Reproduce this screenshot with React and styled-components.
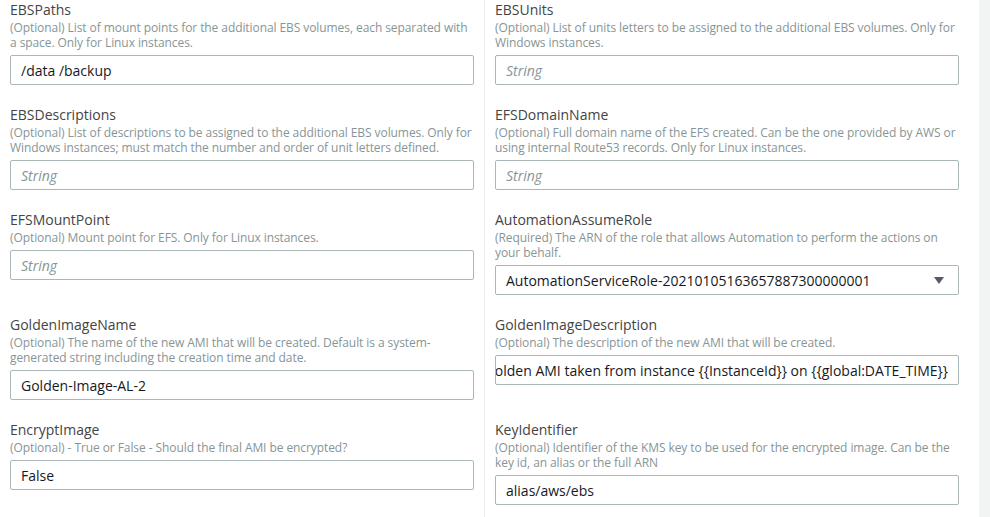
import React from "react";
import styled, { createGlobalStyle } from "styled-components";

const GlobalStyle = createGlobalStyle`
  html, body { margin: 0; padding: 0; background: #ffffff; }
  body { font-family: "Open Sans", "Noto Sans", sans-serif; }
`;

const Page = styled.div`
  display: flex;
  width: 990px;
  height: 517px;
  overflow: hidden;
  background: #ffffff;
`;

const Panel = styled.div`
  flex: 0 0 979px;
  display: grid;
  grid-template-columns: 484px 495px;
  align-content: start;
  background: #ffffff;
`;

const Gutter = styled.div`
  flex: 1;
  background: #f2f3f3;
`;

const Field = styled.div`
  display: flex;
  flex-direction: column;
  padding: ${(p) => (p.$right ? "0 20px 20px 10px" : "0 10px 20px 10px")};
  border-left: ${(p) => (p.$right ? "1px solid #eaeded" : "none")};
`;

const Label = styled.div`
  font-size: 14px;
  line-height: 20px;
  color: #444444;
`;

const Description = styled.div`
  font-size: 12px;
  line-height: 15px;
  letter-spacing: -0.08px;
  color: #879596;
`;

const TextInput = styled.input`
  box-sizing: border-box;
  margin: 5px 0 0;
  width: 100%;
  height: 30px;
  padding: 0 10px;
  border: 1px solid #aab7b8;
  border-radius: 2px;
  font-family: "Open Sans", "Noto Sans", sans-serif;
  font-size: 14px;
  color: #16191f;
  background: #ffffff;
  outline: none;
  &::placeholder {
    font-style: italic;
    color: #879596;
  }
`;

const ScrolledValue = styled.div`
  box-sizing: border-box;
  margin-top: 5px;
  height: 30px;
  padding: 0 10px;
  border: 1px solid #aab7b8;
  border-radius: 2px;
  display: flex;
  align-items: center;
  justify-content: flex-end;
  overflow: hidden;
  white-space: nowrap;
  font-size: 14px;
  color: #16191f;
`;

const SelectBox = styled.div`
  box-sizing: border-box;
  margin-top: 5px;
  height: 30px;
  padding: 0 14px 0 10px;
  border: 1px solid #aab7b8;
  border-radius: 2px;
  display: flex;
  align-items: center;
  justify-content: space-between;
  font-size: 14px;
  color: #16191f;
`;

const Caret = () => (
  <svg width="10" height="7" viewBox="0 0 10 7" aria-hidden="true">
    <path d="M0 0 L10 0 L5 7 Z" fill="#545b64" />
  </svg>
);

function Input({ value, placeholder }) {
  return <TextInput readOnly defaultValue={value} placeholder={placeholder} />;
}

const fields = [
  {
    label: "EBSPaths",
    desc: "(Optional) List of mount points for the additional EBS volumes, each separated with a space. Only for Linux instances.",
    value: "/data /backup",
  },
  {
    label: "EBSUnits",
    desc: "(Optional) List of units letters to be assigned to the additional EBS volumes. Only for Windows instances.",
    placeholder: "String",
  },
  {
    label: "EBSDescriptions",
    desc: "(Optional) List of descriptions to be assigned to the additional EBS volumes. Only for Windows instances; must match the number and order of unit letters defined.",
    placeholder: "String",
  },
  {
    label: "EFSDomainName",
    desc: "(Optional) Full domain name of the EFS created. Can be the one provided by AWS or using internal Route53 records. Only for Linux instances.",
    placeholder: "String",
  },
  {
    label: "EFSMountPoint",
    desc: "(Optional) Mount point for EFS. Only for Linux instances.",
    placeholder: "String",
  },
  {
    label: "AutomationAssumeRole",
    desc: "(Required) The ARN of the role that allows Automation to perform the actions on your behalf.",
    select: "AutomationServiceRole-20210105163657887300000001",
  },
  {
    label: "GoldenImageName",
    desc: "(Optional) The name of the new AMI that will be created. Default is a system-generated string including the creation time and date.",
    value: "Golden-Image-AL-2",
  },
  {
    label: "GoldenImageDescription",
    desc: "(Optional) The description of the new AMI that will be created.",
    scrolled: "Golden AMI taken from instance {{InstanceId}} on {{global:DATE_TIME}}",
  },
  {
    label: "EncryptImage",
    desc: "(Optional) - True or False - Should the final AMI be encrypted?",
    value: "False",
  },
  {
    label: "KeyIdentifier",
    desc: "(Optional) Identifier of the KMS key to be used for the encrypted image. Can be the key id, an alias or the full ARN",
    value: "alias/aws/ebs",
  },
];

export default function App() {
  return (
    <>
      <GlobalStyle />
      <Page>
        <Panel>
          {fields.map((f, i) => (
            <Field key={f.label} $right={i % 2 === 1}>
              <Label>{f.label}</Label>
              <Description>{f.desc}</Description>
              {f.select ? (
                <SelectBox>
                  <span>{f.select}</span>
                  <Caret />
                </SelectBox>
              ) : f.scrolled ? (
                <ScrolledValue>{f.scrolled}</ScrolledValue>
              ) : (
                <Input value={f.value} placeholder={f.placeholder} />
              )}
            </Field>
          ))}
        </Panel>
        <Gutter />
      </Page>
    </>
  );
}
